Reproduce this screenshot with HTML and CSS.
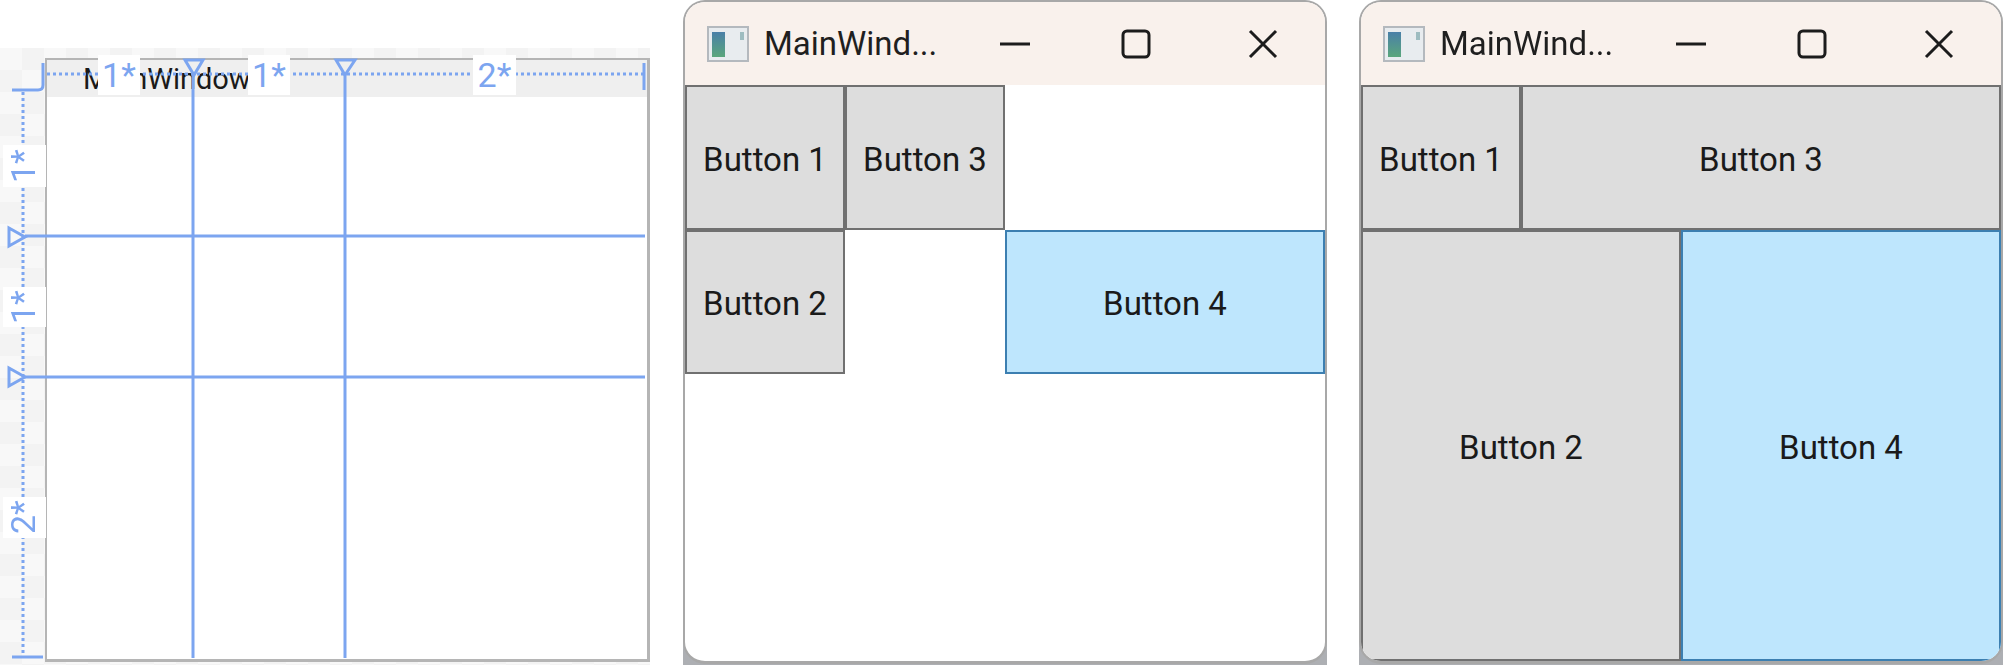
FILE: index.html
```html
<!DOCTYPE html>
<html lang="en">
  <head>
    <meta charset="UTF-8" />
    <title>Grid layout</title>
    <link rel="stylesheet" href="styles.css">
  </head>
  <body>
    <div class="page">
      <!-- Designer surface -->
      <div class="designer">
        <div class="design-frame">
          <div class="design-title">MainWindow</div>
        </div>
        <svg class="guides" width="650" height="665" viewBox="0 0 650 665">
          <path class="dots" d="M47 74H644M23 92V655" />
          <path class="rule" d="M12 90H38Q43 90 43 85V63M644 63V90M12 657H43" />
          <path class="rule" d="M193 74V658M345 74V658M25 236H645M25 377H645" />
          <path class="marker" d="M185 60H203L194 75ZM336 60H355L345 75ZM9 228V246L25 237ZM9 368V386L25 377Z" />
        </svg>
        <span class="size-label top col-a">1*</span>
        <span class="size-label top col-b">1*</span>
        <span class="size-label top col-c">2*</span>
        <span class="size-label side row-a">1*</span>
        <span class="size-label side row-b">1*</span>
        <span class="size-label side row-c">2*</span>
      </div>

      <!-- Running window, buttons in their own cells -->
      <div class="window">
        <div class="window-inner">
          <div class="titlebar">
            <svg class="app-icon" width="42" height="36" viewBox="0 0 42 36">
              <rect x="1" y="1" width="40" height="34" fill="#e8ecef" stroke="#b4b9be" stroke-width="2" />
              <rect x="5" y="6" width="13" height="25" fill="url(#iconFillA)" />
              <rect x="33" y="6" width="4" height="8" fill="#9dbcc0" />
              <defs>
                <linearGradient id="iconFillA" x1="0" y1="0" x2="0" y2="1">
                  <stop offset="0" stop-color="#4a80a8" />
                  <stop offset="1" stop-color="#5aa67c" />
                </linearGradient>
              </defs>
            </svg>
            <span class="window-title">MainWind...</span>
            <div class="controls">
              <div class="control">
                <svg width="30" height="30" viewBox="0 0 30 30"><path d="M0 15H30" /></svg>
              </div>
              <div class="control">
                <svg class="max-icon" width="30" height="30" viewBox="0 0 30 30"><rect x="2" y="2" width="26" height="26" rx="4" /></svg>
              </div>
              <div class="control">
                <svg width="30" height="30" viewBox="0 0 30 30"><path d="M2 2L28 28M28 2L2 28" /></svg>
              </div>
            </div>
          </div>
          <div class="grid">
            <div class="btn">Button 1</div>
            <div class="btn">Button 3</div>
            <div class="btn first-col">Button 2</div>
            <div class="btn hover last-col">Button 4</div>
          </div>
        </div>
      </div>

      <!-- Same window with spans set -->
      <div class="window">
        <div class="window-inner">
          <div class="titlebar">
            <svg class="app-icon" width="42" height="36" viewBox="0 0 42 36">
              <rect x="1" y="1" width="40" height="34" fill="#e8ecef" stroke="#b4b9be" stroke-width="2" />
              <rect x="5" y="6" width="13" height="25" fill="url(#iconFillB)" />
              <rect x="33" y="6" width="4" height="8" fill="#9dbcc0" />
              <defs>
                <linearGradient id="iconFillB" x1="0" y1="0" x2="0" y2="1">
                  <stop offset="0" stop-color="#4a80a8" />
                  <stop offset="1" stop-color="#5aa67c" />
                </linearGradient>
              </defs>
            </svg>
            <span class="window-title">MainWind...</span>
            <div class="controls">
              <div class="control">
                <svg width="30" height="30" viewBox="0 0 30 30"><path d="M0 15H30" /></svg>
              </div>
              <div class="control">
                <svg class="max-icon" width="30" height="30" viewBox="0 0 30 30"><rect x="2" y="2" width="26" height="26" rx="4" /></svg>
              </div>
              <div class="control">
                <svg width="30" height="30" viewBox="0 0 30 30"><path d="M2 2L28 28M28 2L2 28" /></svg>
              </div>
            </div>
          </div>
          <div class="grid">
            <div class="btn">Button 1</div>
            <div class="btn span-top">Button 3</div>
            <div class="btn span-left">Button 2</div>
            <div class="btn hover span-right">Button 4</div>
          </div>
        </div>
      </div>
    </div>
  </body>
</html>
```

FILE: styles.css
```css
body {
  margin: 0;
  background-color: #fff;
  font-family: Roboto, "Open Sans", sans-serif;
}
.page {
  display: flex;
  width: 2004px;
  height: 665px;
  filter: blur(0.5px);
}

/* designer */
.designer {
  position: relative;
  flex: none;
  width: 650px;
  height: 617px;
  padding-top: 48px;
  margin-right: 33px;
  background-clip: content-box;
  background-origin: content-box;
  background-color: #f5f5f5;
  background-image: repeating-conic-gradient(#f3f3f3 0 25%, #f8f8f8 0 50%);
  background-size: 44px 44px;
}
.design-frame {
  box-sizing: border-box;
  width: 605px;
  height: 604px;
  margin: 10px 0 0 45px;
  background-color: #fff;
  border: 2px solid #b5b5b5;
  border-right-width: 3px;
  border-bottom-width: 3px;
}
.design-title {
  height: 37px;
  padding-left: 36px;
  background-color: #efefef;
  color: #1a1a1a;
  font-size: 29px;
  line-height: 38px;
}
.guides {
  position: absolute;
  top: 0;
  left: 0;
  fill: none;
}
.guides .rule,
.guides .marker {
  stroke: #7ca5f0;
  stroke-width: 3;
}
.guides .dots {
  stroke: #7ca5f0;
  stroke-width: 3;
  stroke-dasharray: 3 3;
}
.size-label {
  position: absolute;
  display: flex;
  align-items: center;
  justify-content: center;
  background-color: #fff;
  color: #7ca5f0;
  font-size: 34px;
  line-height: 1;
}
.size-label.top {
  top: 55px;
  height: 40px;
}
.size-label.side {
  left: 3px;
  width: 39px;
  padding-left: 4px;
  writing-mode: vertical-rl;
  transform: rotate(180deg);
}
.col-a {
  left: 98px;
  width: 42px;
}
.col-b {
  left: 248px;
  width: 42px;
}
.col-c {
  left: 473px;
  width: 43px;
}
.row-a {
  top: 145px;
  height: 42px;
}
.row-b {
  top: 287px;
  height: 40px;
}
.row-c {
  top: 497px;
  height: 41px;
}

/* windows */
.window {
  flex: none;
  width: 644px;
  height: 665px;
  margin-right: 32px;
  background-image: linear-gradient(to bottom, #fff 600px, #adafb3 650px);
}
.window-inner {
  box-sizing: border-box;
  display: flex;
  flex-direction: column;
  height: 664px;
  overflow: hidden;
  background-color: #fff;
  border: 2px solid #a8a8a8;
  border-bottom-width: 3px;
  border-radius: 22px;
}
.titlebar {
  flex: none;
  display: flex;
  align-items: center;
  height: 83px;
  padding-left: 22px;
  background-color: #f9f1ec;
}
.app-icon {
  flex: none;
  margin-right: 15px;
}
.window-title {
  flex: 1;
  color: #1f1f1f;
  font-size: 33px;
}
.controls {
  display: flex;
}
.control {
  display: flex;
  align-items: center;
  justify-content: center;
  width: 124px;
}
.control svg {
  fill: none;
  stroke: #1c1c1c;
  stroke-width: 3;
}
.max-icon {
  margin-right: 6px;
}
.grid {
  flex: 1;
  display: grid;
  grid-template-columns: 1fr 1fr 2fr;
  grid-template-rows: 145px 144px 1fr;
}
.btn {
  display: flex;
  align-items: center;
  justify-content: center;
  padding-top: 3px;
  background-color: #ddd;
  border: 2px solid #707070;
  color: #1a1a1a;
  font-size: 33px;
}
.btn.hover {
  background-color: #bee6fd;
  border-color: #3c7fb1;
}
.first-col {
  grid-column: 1;
  grid-row: 2;
}
.last-col {
  grid-column: 3;
  grid-row: 2;
}
.span-top {
  grid-column: 2 / 4;
}
.span-left {
  grid-column: 1 / 3;
  grid-row: 2 / 4;
}
.span-right {
  grid-column: 3;
  grid-row: 2 / 4;
}
```
